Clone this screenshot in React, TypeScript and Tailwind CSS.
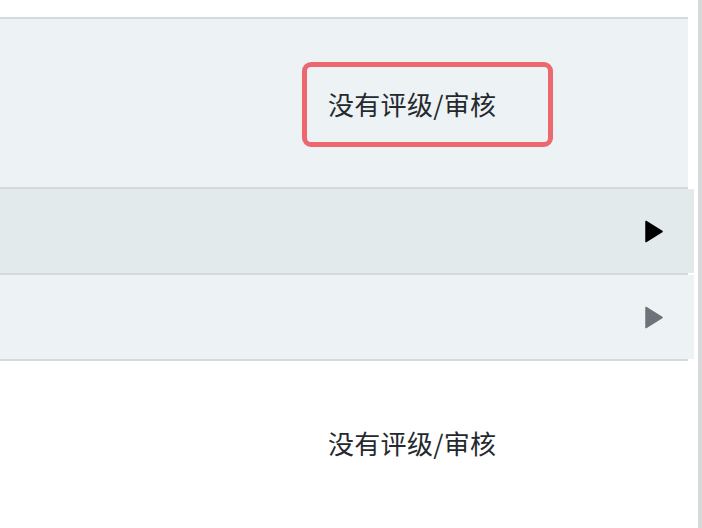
import React from 'react';

const cjk = { fontFamily: '"Noto Sans CJK SC", "Noto Sans", sans-serif' };

function Arrow({ color }: { color: string }) {
  return (
    <svg width="18" height="23" viewBox="0 0 18 23" className="block">
      <path d="M1 1.5 L17 11.5 L1 21.5 Z" fill={color} stroke={color} strokeWidth="1.5" strokeLinejoin="round" />
    </svg>
  );
}

export default function App() {
  return (
    <div className="flex w-[702px] h-[528px] bg-white overflow-hidden" style={cjk}>
      <div className="w-[698px] pt-[17px]">
        {/* rating panel */}
        <div className="w-[688px] h-[172px] bg-[#edf2f5] border-y-2 border-[#d5dadb] pt-[43px] pl-[302px]">
          <div className="w-[251px] h-[85px] border-[5px] border-[#ec686e] rounded-[9px] flex items-center pl-[21px] pb-[3px] text-[26px] tracking-[0.3px] text-[#25292d]">
            没有评级/审核
          </div>
        </div>

        {/* expandable rows */}
        <div className="w-[694px] h-[84px] bg-[#e3eaec] flex items-center justify-end pr-[31px]">
          <Arrow color="#000000" />
        </div>
        <div className="w-[688px] h-[2px] bg-[#d5dadb]" />
        <div className="w-[694px] h-[84px] bg-[#edf2f5] flex items-center justify-end pr-[31px]">
          <Arrow color="#6c737a" />
        </div>
        <div className="w-[688px] h-[2px] bg-[#d5dadb]" />

        <div className="pl-[328px] pt-[66px] text-[26px] tracking-[0.3px] leading-[32px] text-[#25292d]">没有评级/审核</div>
      </div>
      <div className="w-[4px] h-full bg-[#d6d9da]" />
    </div>
  );
}
